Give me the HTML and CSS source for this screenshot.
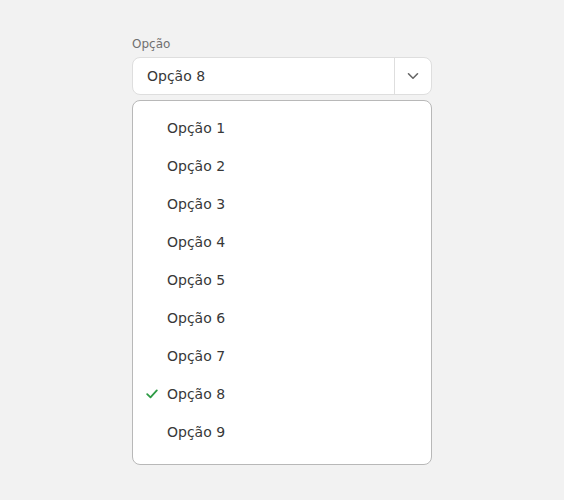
FILE: index.html
```html
<!DOCTYPE html>
<html lang="pt">
<head>
<meta charset="utf-8">
<link rel="stylesheet" href="styles.css">
</head>
<body>
<div class="field">
  <label class="label">Opção</label>
  <div class="select">
    <span class="value">Opção 8</span>
    <span class="toggle">
      <svg width="12" height="8" viewBox="0 0 12 8"><path d="M1.5 1.8 L6 6.2 L10.5 1.8" fill="none" stroke="#666" stroke-width="1.6" stroke-linecap="round" stroke-linejoin="round"/></svg>
    </span>
  </div>
  <ul class="menu">
    <li class="item">Opção 1</li>
    <li class="item">Opção 2</li>
    <li class="item">Opção 3</li>
    <li class="item">Opção 4</li>
    <li class="item">Opção 5</li>
    <li class="item">Opção 6</li>
    <li class="item">Opção 7</li>
    <li class="item selected"><svg class="check" width="12" height="10" viewBox="0 0 12 10"><path d="M1.2 5.2 L4.5 8.4 L10.8 1.4" fill="none" stroke="#2e9b45" stroke-width="1.8" stroke-linecap="round" stroke-linejoin="round"/></svg>Opção 8</li>
    <li class="item">Opção 9</li>
  </ul>
</div>
</body>
</html>
```
FILE: styles.css
```css
html, body {
  margin: 0;
  padding: 0;
  background: #f2f2f2;
}
body {
  font-family: "DejaVu Sans", sans-serif;
  color: #333;
}
.field {
  width: 300px;
  margin: 37px 0 0 132px;
  display: flex;
  flex-direction: column;
}
.label {
  font-size: 12px;
  color: #707070;
  line-height: 14px;
  margin-bottom: 6px;
}
.select {
  height: 38px;
  box-sizing: border-box;
  background: #fff;
  border: 1px solid #dedede;
  border-radius: 8px;
  display: flex;
  align-items: center;
}
.value {
  flex: 1;
  padding-left: 14px;
  font-size: 14px;
  color: #383838;
}
.toggle {
  width: 36px;
  height: 100%;
  border-left: 1px solid #dedede;
  display: flex;
  align-items: center;
  justify-content: center;
}
.menu {
  list-style: none;
  margin: 5px 0 0 0;
  padding: 8px 0 13px 0;
  background: #fff;
  border: 1px solid #b8b8b8;
  border-radius: 8px;
}
.item {
  height: 38px;
  display: flex;
  align-items: center;
  padding-left: 34px;
  font-size: 14px;
  color: #383838;
  position: relative;
}
.check {
  position: absolute;
  left: 13px;
  top: 14px;
}
```
